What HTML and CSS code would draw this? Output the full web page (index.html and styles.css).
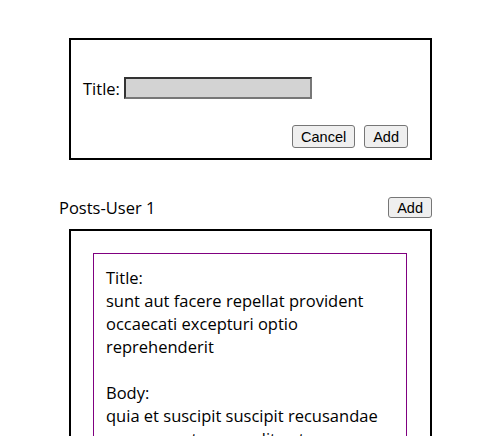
FILE: index.html
```html
<!DOCTYPE html>
<html>
<head>
<meta charset="utf-8">
<link rel="stylesheet" href="styles.css">
</head>
<body>
<div class="page">
  <div class="form-box">
    <div class="title-row">
      <label class="label">Title:</label>
      <input class="title-input" type="text">
    </div>
    <div class="actions">
      <button class="btn">Cancel</button>
      <button class="btn">Add</button>
    </div>
  </div>
  <div class="posts-header">
    <span class="posts-title">Posts-User 1</span>
    <button class="btn">Add</button>
  </div>
  <div class="posts-box">
    <div class="post">
      <div>Title:</div>
      <div>sunt aut facere repellat provident occaecati excepturi optio reprehenderit</div>
      <div class="spacer">&nbsp;</div>
      <div>Body:</div>
      <div>quia et suscipit suscipit recusandae consequuntur expedita et cum reprehenderit molestiae ut ut quas totam nostrum rerum est autem sunt rem eveniet architecto</div>
    </div>
  </div>
</div>
</body>
</html>
```
FILE: styles.css
```css
html, body {
  margin: 0;
  padding: 0;
  background: #fff;
  overflow: hidden;
}
.page {
  font-family: "Open Sans", "Noto Sans", sans-serif;
  font-size: 16.5px;
  color: #000;
  display: flex;
  flex-direction: column;
  padding: 38px 0 0 59px;
  width: 373px;
}
.form-box {
  margin-left: 10px;
  border: 2px solid #000;
  padding: 37px 22px 10px 12px;
  display: flex;
  flex-direction: column;
}
.title-row {
  display: flex;
  align-items: center;
  height: 22px;
}
.label {
  margin-right: 4px;
}
.title-input {
  box-sizing: border-box;
  width: 188px;
  height: 22px;
  margin: 0;
  background: #d3d3d3;
  border-width: 2px;
  border-style: solid;
  border-top-color: #333;
  border-left-color: #333;
  border-right-color: #777;
  border-bottom-color: #777;
  padding: 0;
}
.actions {
  margin-top: 26px;
  display: flex;
  justify-content: flex-end;
  gap: 9px;
}
.btn {
  font-family: "Liberation Sans", Arial, sans-serif;
  font-size: 14.5px;
  height: 23px;
  padding: 0 8px;
  border: 1px solid #767676;
  border-radius: 3px;
  background: #efefef;
  color: #000;
  margin: 0;
}
.posts-header {
  margin-top: 37px;
  display: flex;
  justify-content: space-between;
  align-items: center;
  height: 21px;
}
.posts-header .btn {
  height: 21px;
}
.posts-box {
  margin-top: 11px;
  margin-left: 10px;
  border: 2px solid #000;
  border-bottom: none;
  padding: 22px 23px 0 22px;
}
.post {
  border: 1px solid #800080;
  padding: 12px 12px 20px 12px;
  line-height: 23px;
}
```
